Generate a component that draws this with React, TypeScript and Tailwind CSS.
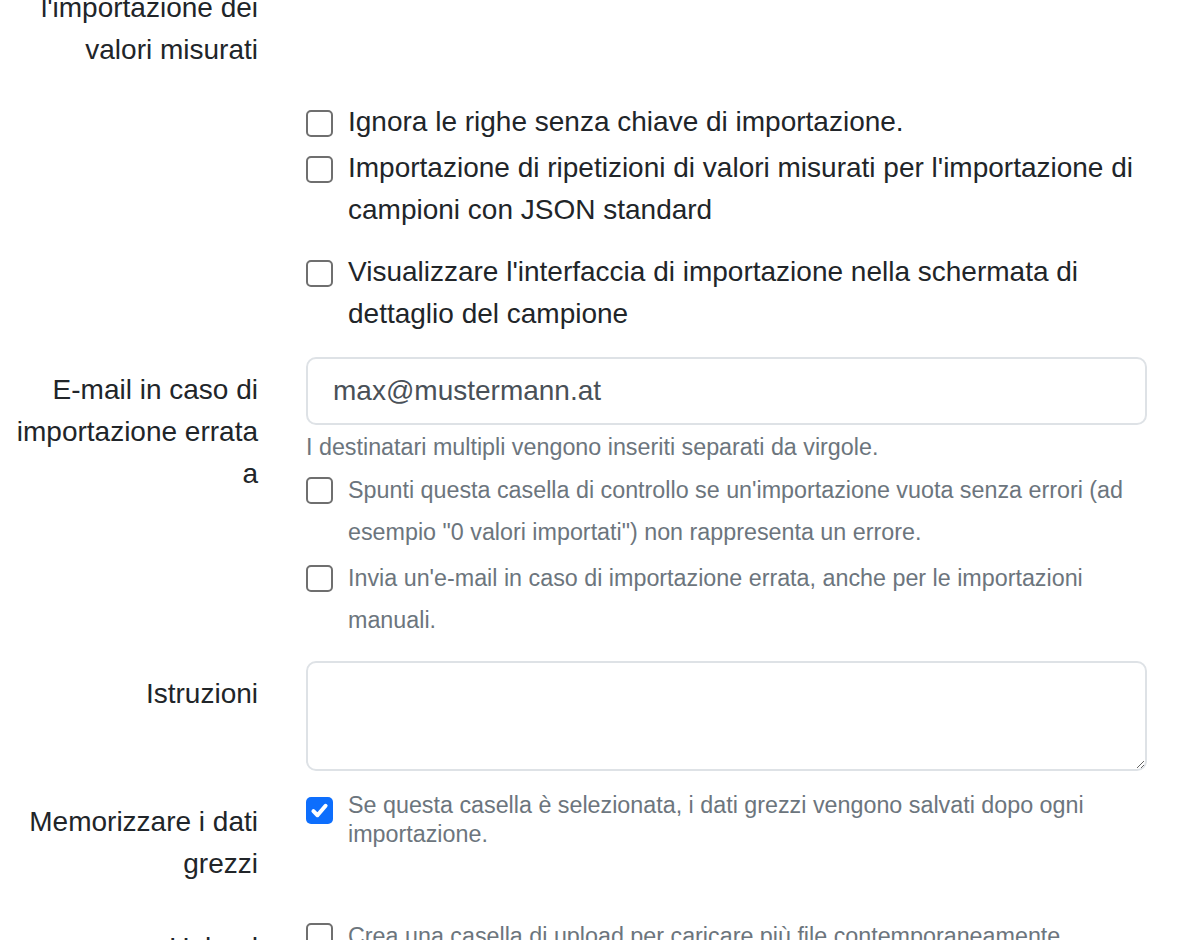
import React from 'react';

const Box = ({ checked = false, className = '' }: { checked?: boolean; className?: string }) =>
  checked ? (
    <span className={`flex h-[27px] w-[27px] shrink-0 items-center justify-center rounded-[5px] bg-[#0d6efd] ${className}`}>
      <svg viewBox="0 0 20 20" className="h-[27px] w-[27px]">
        <path d="M5.5 10.5l3 3l6-7" fill="none" stroke="#fff" strokeWidth="3" strokeLinecap="round" strokeLinejoin="round" />
      </svg>
    </span>
  ) : (
    <span className={`block h-[27px] w-[27px] shrink-0 rounded-[5px] border-2 border-[#6f6f6f] bg-white ${className}`} />
  );

const Check = ({ children, small = false, className = '' }: { children: React.ReactNode; small?: boolean; className?: string }) => (
  <div className={`flex gap-[15px] ${className}`}>
    <Box className={small ? 'mt-[8px]' : 'mt-[9px]'} />
    <div className={small ? 'text-[23.3px] leading-[42px] text-[#6c757d]' : 'leading-[42px]'}>{children}</div>
  </div>
);

const Row = ({ label, children, className = '' }: { label?: React.ReactNode; children?: React.ReactNode; className?: string }) => (
  <div className={`grid grid-cols-[250px_1fr] gap-x-[48px] ${className}`}>
    <label className="py-[12px] text-right leading-[42px]">{label}</label>
    <div>{children}</div>
  </div>
);

export default function App() {
  return (
    <div className="h-[940px] overflow-hidden bg-white font-['Liberation_Sans',Arial,sans-serif] text-[28px] leading-[42px] text-[#212529]">
      <div className="mt-[-67px] pl-[8px] pr-[51px]">
        <Row label="Formato per l'importazione dei valori misurati" className="mb-[18px]" />

        {/* import options */}
        <div className="grid grid-cols-[250px_1fr] gap-x-[48px] mb-[22px]">
          <div />
          <div>
            <Check className="mb-[4px]">Ignora le righe senza chiave di importazione.</Check>
            <Check className="mb-[20px]">
              Importazione di ripetizioni di valori misurati per l'importazione di campioni con JSON standard
            </Check>
            <Check>Visualizzare l'interfaccia di importazione nella schermata di dettaglio del campione</Check>
          </div>
        </div>

        <Row label="E-mail in caso di importazione errata a" className="mb-[20px]">
          <div className="flex h-[68px] items-center rounded-[10px] border-2 border-[#dee2e6] px-[25px] text-[#495057]">
            max@mustermann.at
          </div>
          <div className="mt-[4px] text-[23.3px] leading-[36px] text-[#6c757d]">
            I destinatari multipli vengono inseriti separati da virgole.
          </div>
          <Check small className="mt-[4px] mb-[4px]">
            Spunti questa casella di controllo se un'importazione vuota senza errori (ad esempio "0 valori importati") non rappresenta un errore.
          </Check>
          <Check small>Invia un'e-mail in caso di importazione errata, anche per le importazioni manuali.</Check>
        </Row>

        <Row label="Istruzioni" className="mb-[18px]">
          <textarea className="block h-[110px] w-full resize-y rounded-[10px] border-2 border-[#dee2e6] px-[25px] py-[12px] outline-none" />
        </Row>

        <Row label="Memorizzare i dati grezzi" className="mb-[18px]">
          <div className="flex gap-[15px]">
            <Box checked className="mt-[8px]" />
            <div className="mt-[2px] text-[23.3px] leading-[29px] text-[#6c757d]">
              Se questa casella è selezionata, i dati grezzi vengono salvati dopo ogni importazione.
            </div>
          </div>
        </Row>

        <Row
          label={
            <>
              Upload
              <br />
              multiplo
            </>
          }
        >
          <Check small>Crea una casella di upload per caricare più file contemporaneamente</Check>
        </Row>
      </div>
    </div>
  );
}
